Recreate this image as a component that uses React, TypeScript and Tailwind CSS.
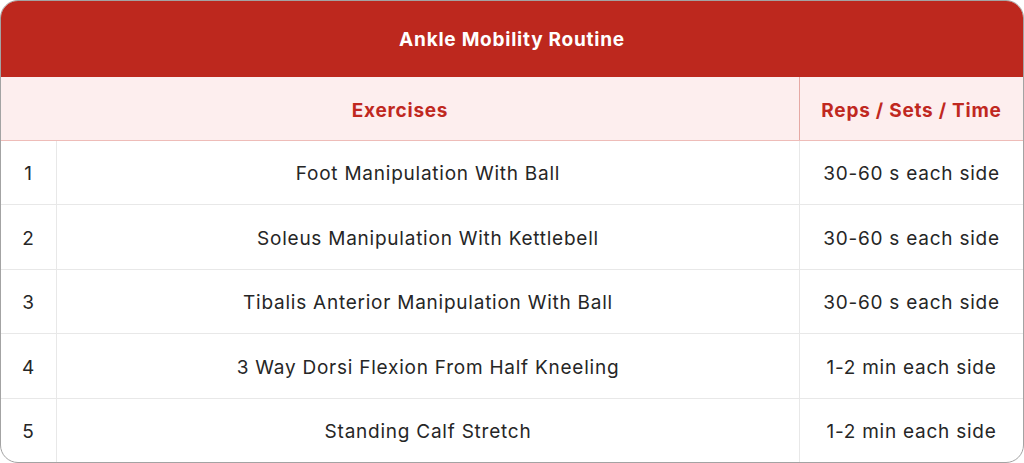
const rows = [
  { n: 1, name: "Foot Manipulation With Ball", reps: "30-60 s each side" },
  { n: 2, name: "Soleus Manipulation With Kettlebell", reps: "30-60 s each side" },
  { n: 3, name: "Tibalis Anterior Manipulation With Ball", reps: "30-60 s each side" },
  { n: 4, name: "3 Way Dorsi Flexion From Half Kneeling", reps: "1-2 min each side" },
  { n: 5, name: "Standing Calf Stretch", reps: "1-2 min each side" },
];

export default function App() {
  return (
    <div className="w-[1024px] h-[463px] bg-white" style={{ fontFamily: "Inter, 'Noto Sans', sans-serif" }}>
      <div className="h-[463px] rounded-[18px] border border-[#a3a3a3] overflow-hidden flex flex-col">
        <div className="h-[76px] pt-[2px] bg-[#bd281e] flex items-center justify-center text-white font-bold text-[19px] tracking-[0.04em]">
          Ankle Mobility Routine
        </div>
        <div className="h-[64px] pt-[5px] bg-[#fdeeee] border-b border-[#eebcb8] flex text-[#c0281f] font-bold text-[19px] tracking-[0.04em]">
          <div className="flex-1 flex items-center justify-center">Exercises</div>
          <div className="w-[224px] -mt-[5px] pt-[5px] border-l border-[#e6a9a4] flex items-center justify-center">Reps / Sets / Time</div>
        </div>
        {rows.map((r, i) => (
          <div
            key={r.n}
            className={
              "flex-1 flex text-[#262626] text-[19px] tracking-[0.04em] " +
              (i < rows.length - 1 ? "border-b border-[#e8e8e8]" : "")
            }
          >
            <div className="w-[56px] pt-[4px] border-r border-[#e8e8e8] flex items-center justify-center">{r.n}</div>
            <div className="flex-1 pt-[4px] flex items-center justify-center">{r.name}</div>
            <div className="w-[224px] pt-[4px] border-l border-[#e8e8e8] flex items-center justify-center">{r.reps}</div>
          </div>
        ))}
      </div>
    </div>
  );
}
